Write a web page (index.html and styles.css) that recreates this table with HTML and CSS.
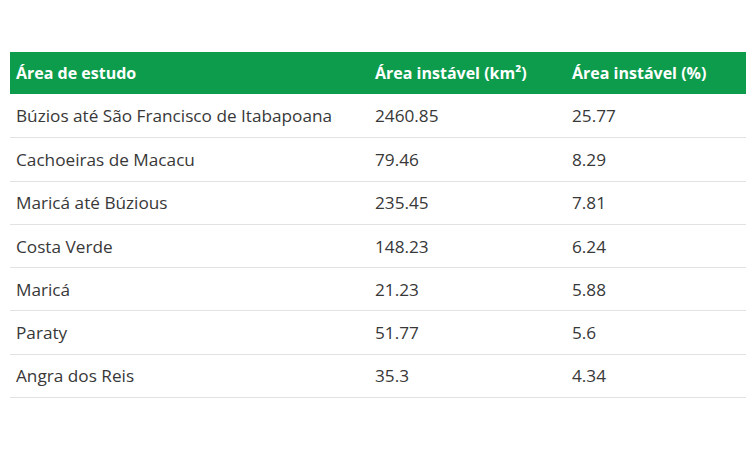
FILE: index.html
```html
<!DOCTYPE html>
<html lang="pt">
<head>
<meta charset="utf-8">
<link rel="stylesheet" href="styles.css">
</head>
<body>
<div class="wrap">
<table class="data">
<thead>
<tr><th class="c1">Área de estudo</th><th class="c2">Área instável (km²)</th><th class="c3">Área instável (%)</th></tr>
</thead>
<tbody>
<tr class="first"><td>Búzios até São Francisco de Itabapoana</td><td>2460.85</td><td>25.77</td></tr>
<tr><td>Cachoeiras de Macacu</td><td>79.46</td><td>8.29</td></tr>
<tr><td>Maricá até Búzious</td><td>235.45</td><td>7.81</td></tr>
<tr><td>Costa Verde</td><td>148.23</td><td>6.24</td></tr>
<tr><td>Maricá</td><td>21.23</td><td>5.88</td></tr>
<tr><td>Paraty</td><td>51.77</td><td>5.6</td></tr>
<tr><td>Angra dos Reis</td><td>35.3</td><td>4.34</td></tr>
</tbody>
</table>
</div>
</body>
</html>
```
FILE: styles.css
```css
html, body { margin: 0; padding: 0; background: #fff; }
body { font-family: "Open Sans", "Noto Sans", sans-serif; color: #333; }
.wrap { padding: 52px 8px 0 10px; }
.data { width: 736px; border-collapse: collapse; table-layout: fixed; }
.data th { background: #0c9c4c; color: #fff; font-weight: 700; font-size: 16px; text-align: left; height: 42px; padding: 0 6px; }
.data td { font-size: 17.2px; height: 42.3px; padding: 0 6px; border-bottom: 1px solid #e2e2e2; color: #383838; }
.data .first td { height: 43.3px; }
.c1 { width: 347px; }
.c2 { width: 185px; }
.c3 { width: auto; }
```
